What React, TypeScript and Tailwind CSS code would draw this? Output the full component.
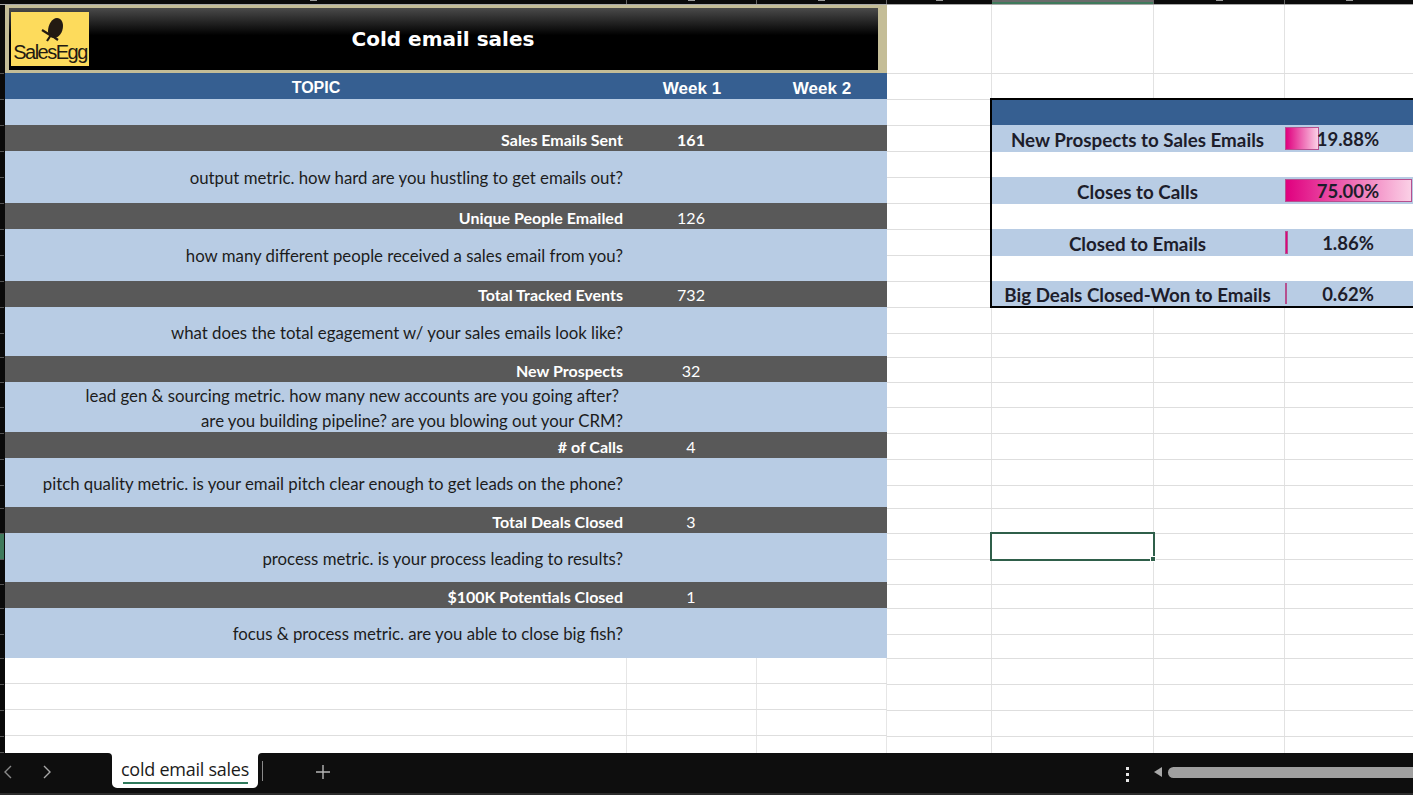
const sans = "font-['Lato','Carlito',sans-serif]";

const metrics = [
  { label: "Sales Emails Sent", value: "161", bold: true, note: ["output metric. how hard are you hustling to get emails out?"], h: 52, shift: "", tight: false },
  { label: "Unique People Emailed", value: "126", note: ["how many different people received a sales email from you?"], h: 52, shift: "", tight: false },
  { label: "Total Tracked Events", value: "732", note: ["what does the total egagement w/ your sales emails look like?"], h: 49, shift: "pt-[2px]", tight: true },
  { label: "New Prospects", value: "32", note: ["lead gen & sourcing metric. how many new accounts are you going after?", "are you building pipeline? are you blowing out your CRM?"], h: 50, shift: "pt-px", tight: false },
  { label: "# of Calls", value: "4", note: ["pitch quality metric. is your email pitch clear enough to get leads on the phone?"], h: 49, shift: "pt-[2px]", tight: false },
  { label: "Total Deals Closed", value: "3", note: ["process metric. is your process leading to results?"], h: 49, shift: "pt-[2px]", tight: false },
  { label: "$100K Potentials Closed", value: "1", note: ["focus & process metric. are you able to close big fish?"], h: 50, shift: "", tight: false },
];

const lowerRows = [24, 25, 25, 26, 26, 26, 23, 25, 26, 25, 24, 26, 24, 26, 26, 26];
const eRows = [69, 26, 26, 26, 26, 26, 26, 26, 26, 26, 26, ...lowerRows, 16];

const summary = [
  { label: "New Prospects to Sales Emails", value: "19.88%", bar: 34, grad: true },
  { label: "Closes to Calls", value: "75.00%", bar: 127, grad: true },
  { label: "Closed to Emails", value: "1.86%", bar: 3, grad: false },
  { label: "Big Deals Closed-Won to Emails", value: "0.62%", bar: 1, grad: false },
];

function Logo() {
  return (
    <div className="w-[78px] h-[54px] bg-[#fddb5c] flex flex-col items-center overflow-hidden shrink-0">
      <svg width="34" height="27" viewBox="0 0 34 27" className="mt-[5px] shrink-0">
        <path d="M24 1c4 0 6 4 6 8 0 6-4 12-9 12-4 0-6-3-6-7 0-6 4-13 9-13z" fill="#231a12" />
        <path d="M9 13l8 5M14 24l4-6 7 5" fill="none" stroke="#231a12" strokeWidth="2.2" />
      </svg>
      <div className="-mt-[3px] leading-[22px] text-[20px] tracking-[-1.5px] text-[#231a12] font-['Liberation_Sans',sans-serif] whitespace-nowrap">
        <span>Sales</span><span className="font-light">Egg</span>
      </div>
    </div>
  );
}

function GridRow({ h, last }: { h: number; last?: boolean }) {
  return (
    <div className={`flex shrink-0 ${last ? "" : "border-b border-[#dedede]"}`} style={{ height: h }}>
      <div className="w-[163px] shrink-0 border-r border-[#e2e2e2]" />
      <div className="w-[131px] shrink-0 border-r border-[#e2e2e2]" />
      <div className="flex-1" />
    </div>
  );
}

function Stub() {
  return <div className="w-[7px] h-px bg-[#9a9a9a]" />;
}

export default function App() {
  return (
    <div className="w-[1413px] h-[795px] overflow-hidden flex flex-col bg-white">
      {/* column header strip */}
      <div className="h-[5px] shrink-0 bg-[#0a0a0a] border-b border-[#a8a8a8] flex">
        <div className="w-[627px] shrink-0 border-r border-[#666] flex justify-center"><Stub /></div>
        <div className="w-[130px] shrink-0 border-r border-[#666] flex justify-center"><Stub /></div>
        <div className="w-[130px] shrink-0 border-r border-[#666] flex justify-center"><Stub /></div>
        <div className="w-[105px] shrink-0 flex justify-center"><Stub /></div>
        <div className="w-[161px] shrink-0 bg-[#6b6b6b] flex flex-col justify-end">
          <div className="h-[2px] bg-[#3f7a5c]" />
        </div>
        <div className="w-[131px] shrink-0 border-l border-[#666] flex justify-center"><Stub /></div>
        <div className="flex-1 border-l border-[#666] flex justify-center"><Stub /></div>
      </div>

      <div className="flex flex-1 min-h-0">
        {/* row gutter */}
        <div className="w-[5px] shrink-0 bg-[#0a0a0a] flex flex-col pr-px">
          {eRows.map((h, i) => (
            <div
              key={i}
              className={`shrink-0 border-b border-[#555] ${i === 19 ? "bg-[#3f7a5c]" : ""}`}
              style={{ height: h }}
            />
          ))}
        </div>

        {/* main table */}
        <div className="w-[882px] shrink-0 flex flex-col">
          <div className="h-[68px] shrink-0 bg-[#c4bd97] pl-[4px] pr-[9px] py-[3px]">
            <div className="h-full bg-[linear-gradient(#4a4a4a,#000_44%)] grid grid-cols-[1fr_auto_1fr] items-center pl-[2px] pr-[3px]">
              <Logo />
              <div className="text-white font-bold text-[20px] font-['DejaVu_Sans',sans-serif]">
                Cold email sales
              </div>
              <div />
            </div>
          </div>

          <div className="h-[26px] shrink-0 bg-[#365f91] grid grid-cols-[622px_130px_130px] items-center text-white font-bold font-['Liberation_Sans',sans-serif]">
            <div className="text-center text-[16px] pt-px">TOPIC</div>
            <div className="text-center text-[17px] pt-[3px]">Week 1</div>
            <div className="text-center text-[17px] pt-[3px]">Week 2</div>
          </div>
          <div className="h-[26px] shrink-0 bg-[#b8cce4]" />

          {metrics.map((m) => (
            <div key={m.label} className={`flex flex-col shrink-0 ${sans}`}>
              <div className={`h-[26px] bg-[#595959] grid grid-cols-[618px_136px_128px] items-center text-white text-[16px] ${m.tight ? "pt-px" : "pt-[3px]"}`}>
                <div className="text-right font-bold">{m.label}</div>
                <div className={`text-center ${m.bold ? "font-bold" : ""}`}>{m.value}</div>
                <div />
              </div>
              <div
                className={`bg-[#b8cce4] flex flex-col justify-center items-end pr-[264px] text-[16.8px] leading-[25px] text-[#1c1c1c] ${m.shift}`}
                style={{ height: m.h }}
              >
                {m.note.map((t, i) => (
                  <div key={i} className={m.note.length > 1 && i === 0 ? "pr-[4px]" : ""}>{t}</div>
                ))}
              </div>
            </div>
          ))}

          {/* empty rows under table */}
          {[26, 26, 26, 17].map((h, i) => (
            <div key={i} className={`flex shrink-0 ${i < 3 ? "border-b border-[#dedede]" : ""}`} style={{ height: h }}>
              <div className="w-[622px] border-r border-[#e6e6e6]" />
              <div className="w-[130px] border-r border-[#e6e6e6]" />
              <div className="w-[130px] border-r border-[#e6e6e6]" />
            </div>
          ))}
        </div>

        {/* empty column between table and summary */}
        <div className="w-[105px] shrink-0 flex flex-col border-r border-[#e2e2e2]">
          {eRows.map((h, i) => (
            <div key={i} className={`shrink-0 ${i < eRows.length - 1 ? "border-b border-[#dedede]" : ""}`} style={{ height: h }} />
          ))}
        </div>

        {/* right columns */}
        <div className="flex-1 min-w-0 -ml-px flex flex-col relative">
          <GridRow h={69} />
          <div className="h-[24px] shrink-0 flex">
            <div className="w-[163px] shrink-0 border-r border-[#e2e2e2]" />
            <div className="w-[131px] shrink-0 border-r border-[#e2e2e2]" />
          </div>

          {/* summary box */}
          <div className="h-[210px] shrink-0 -ml-px border-2 border-r-0 border-black flex flex-col">
            <div className="h-[25px] shrink-0 bg-[#365f91]" />
            {summary.map((s, i) => (
              <div key={s.label} className={`flex flex-col shrink-0 ${sans}`}>
                <div className={`flex items-center font-bold text-[#1d1d2b] bg-[#b8cce4] ${i === 3 ? "h-[25px]" : "h-[27px]"}`}>
                  <div className="w-[293px] shrink-0 text-center text-[18.8px] pt-[3px] pr-[2px] whitespace-nowrap">{s.label}</div>
                  <div className="flex-1 relative h-full">
                    <div
                      className={`absolute left-0 top-[2px] bottom-[2px] border border-[#b5508f] ${s.grad ? "bg-[linear-gradient(90deg,#e0007f,#fbd0e6)]" : "bg-[#e0007f]"}`}
                      style={{ width: s.bar }}
                    />
                    <div className="relative text-center text-[18.5px] pr-[2px] h-full flex items-center justify-center pt-[3px]">{s.value}</div>
                  </div>
                </div>
                {i < 3 && <div className="h-[25px] bg-white" />}
              </div>
            ))}
          </div>

          <div className="h-[26px] shrink-0 flex border-b border-[#dedede]">
            <div className="w-[163px] shrink-0 border-r border-[#e2e2e2]" />
            <div className="w-[131px] shrink-0 border-r border-[#e2e2e2]" />
          </div>
          {lowerRows.map((h, i) => (
            <GridRow key={i} h={h} />
          ))}
          <GridRow h={16} last />

          {/* active cell */}
          <div className="absolute -left-px top-[527px] w-[165px] h-[29px] border-2 border-[#2f5f4a]">
            <div className="absolute -right-[3px] -bottom-[3px] w-[4px] h-[4px] bg-[#2f5f4a] border border-white box-content" />
          </div>
        </div>
      </div>

      {/* sheet tab bar */}
      <div className="h-[42px] shrink-0 bg-white flex items-stretch text-white">
        <div className="w-[112px] shrink-0 bg-[#0e0e0e] rounded-tr-[4px] border-b-2 border-[#2c2c2c] flex items-start">
          <svg width="10" height="14" viewBox="0 0 10 14" className="ml-[3px] mt-[12px]"><path d="M8 1L2 7l6 6" fill="none" stroke="#8a8a8a" strokeWidth="1.4" /></svg>
          <svg width="10" height="14" viewBox="0 0 10 14" className="ml-[29px] mt-[12px]"><path d="M2 1l6 6-6 6" fill="none" stroke="#a8a8a8" strokeWidth="1.4" /></svg>
        </div>
        <div className="w-[146px] shrink-0 bg-[#0e0e0e] border-b-2 border-[#2c2c2c]">
          <div className="h-[35px] bg-white rounded-b-[5px] flex flex-col items-center text-[#1b1b1b] text-[18px] tracking-[-0.25px] font-['Open_Sans',sans-serif]">
            <div className="leading-[25px] mt-[4px] whitespace-nowrap">cold email sales</div>
            <div className="w-[125px] h-[2px] bg-[#2f7a5c]" />
          </div>
        </div>
        <div className="flex-1 bg-[#0e0e0e] rounded-tl-[4px] border-b-2 border-[#2c2c2c] flex items-start">
          <div className="w-px h-[20px] bg-[#8a8a8a] ml-[4px] mt-[8px]" />
          <svg width="16" height="16" viewBox="0 0 16 16" className="ml-[52px] mt-[11px]"><path d="M8 1v14M1 8h14" stroke="#b5b5b5" strokeWidth="1.4" /></svg>
          <div className="flex-1" />
          <div className="flex flex-col gap-[3px] mt-[14px] mr-[24px]">
            <div className="w-[3px] h-[3px] bg-[#e5e5e5]" />
            <div className="w-[3px] h-[3px] bg-[#e5e5e5]" />
            <div className="w-[3px] h-[3px] bg-[#e5e5e5]" />
          </div>
          <svg width="10" height="12" viewBox="0 0 10 12" className="mt-[13px] mr-[5px]"><path d="M9 1v10L1 6z" fill="#a8a8a8" /></svg>
          <div className="w-[245px] h-[11px] mt-[14px] bg-[#a0a0a0] rounded-l-full" />
        </div>
      </div>
    </div>
  );
}
